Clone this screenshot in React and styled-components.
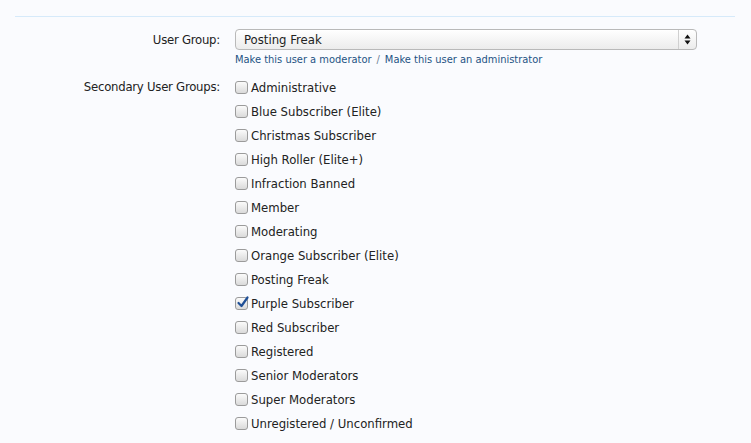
import React from 'react'
import styled, { createGlobalStyle } from 'styled-components'

const groups = [
    'Administrative',
    'Blue Subscriber (Elite)',
    'Christmas Subscriber',
    'High Roller (Elite+)',
    'Infraction Banned',
    'Member',
    'Moderating',
    'Orange Subscriber (Elite)',
    'Posting Freak',
    'Purple Subscriber',
    'Red Subscriber',
    'Registered',
    'Senior Moderators',
    'Super Moderators',
    'Unregistered / Unconfirmed',
]

const checked = ['Purple Subscriber']

const Global = createGlobalStyle`
    html, body {
        margin: 0;
        padding: 0;
        background: #fafbfe;
    }
    body {
        font-family: "DejaVu Sans Condensed", "DejaVu Sans", sans-serif;
        font-size: 13px;
        color: #222;
    }
`

const Page = styled.div`
    padding: 16px 16px 0 15px;
`

const Rule = styled.div`
    border-top: 1px solid #d6eafa;
    width: 720px;
    margin-bottom: 12px;
`

const Row = styled.div`
    display: grid;
    grid-template-columns: 205px 462px;
    column-gap: 15px;
    margin-bottom: ${p => p.gap || 0}px;
`

const Label = styled.div`
    text-align: right;
    padding-top: ${p => p.top || 0}px;
    line-height: 16px;
    letter-spacing: -0.25px;
`

const Select = styled.div`
    height: 19px;
    border: 1px solid #b9b9b9;
    border-radius: 4px;
    background: linear-gradient(#ffffff, #ececec);
    display: flex;
    align-items: center;
    box-shadow: inset 0 1px 0 #fff;
`

const SelectText = styled.span`
    flex: 1;
    padding-left: 8px;
    font-size: 13px;
`

const Arrows = styled.div`
    width: 17px;
    height: 100%;
    border-left: 1px solid #d0d0d0;
    display: flex;
    align-items: center;
    justify-content: center;
`

const Links = styled.div`
    font-size: 11px;
    color: #1e5384;
    margin-top: 3px;
    line-height: 14px;
`

const LinkA = styled.span`
    cursor: pointer;
`

const Sep = styled.span`
    color: #6a7f95;
    margin: 0 5px;
`

const List = styled.div`
    display: flex;
    flex-direction: column;
`

const Item = styled.label`
    display: flex;
    align-items: center;
    height: 24px;
    gap: 3px;
`

const Box = styled.span`
    width: 11px;
    height: 11px;
    border: 1px solid #9b9b9b;
    border-radius: 3px;
    background: linear-gradient(#fbfbfb, #dadada);
    position: relative;
    flex: none;
`

const Tick = styled.svg`
    position: absolute;
    left: 0;
    top: -3px;
`

const Check = ({ on }) => (
    <Box>
        {on && (
            <Tick width="14" height="14" viewBox="0 0 14 14">
                <path d="M2.5 8 L5.5 11 L11.5 2.5" fill="none" stroke="#1f4f96" strokeWidth="2.2" strokeLinecap="round" strokeLinejoin="round" />
            </Tick>
        )}
    </Box>
)

const App = () => {
    return (
        <Page>
            <Global />
            <Rule />
            <Row gap={8}>
                <Label top={3}>User Group:</Label>
                <div>
                    <Select>
                        <SelectText>Posting Freak</SelectText>
                        <Arrows>
                            <svg width="7" height="11" viewBox="0 0 7 11">
                                <path d="M3.5 0.5 L6.5 4.5 L0.5 4.5 Z M3.5 10.5 L6.5 6.5 L0.5 6.5 Z" fill="#111" />
                            </svg>
                        </Arrows>
                    </Select>
                    <Links>
                        <LinkA>Make this user a moderator</LinkA>
                        <Sep>/</Sep>
                        <LinkA>Make this user an administrator</LinkA>
                    </Links>
                </div>
            </Row>
            <Row>
                <Label top={4}>Secondary User Groups:</Label>
                <List>
                    {groups.map(g => (
                        <Item key={g}>
                            <Check on={checked.includes(g)} />
                            {g}
                        </Item>
                    ))}
                </List>
            </Row>
        </Page>
    )
}

export default App
